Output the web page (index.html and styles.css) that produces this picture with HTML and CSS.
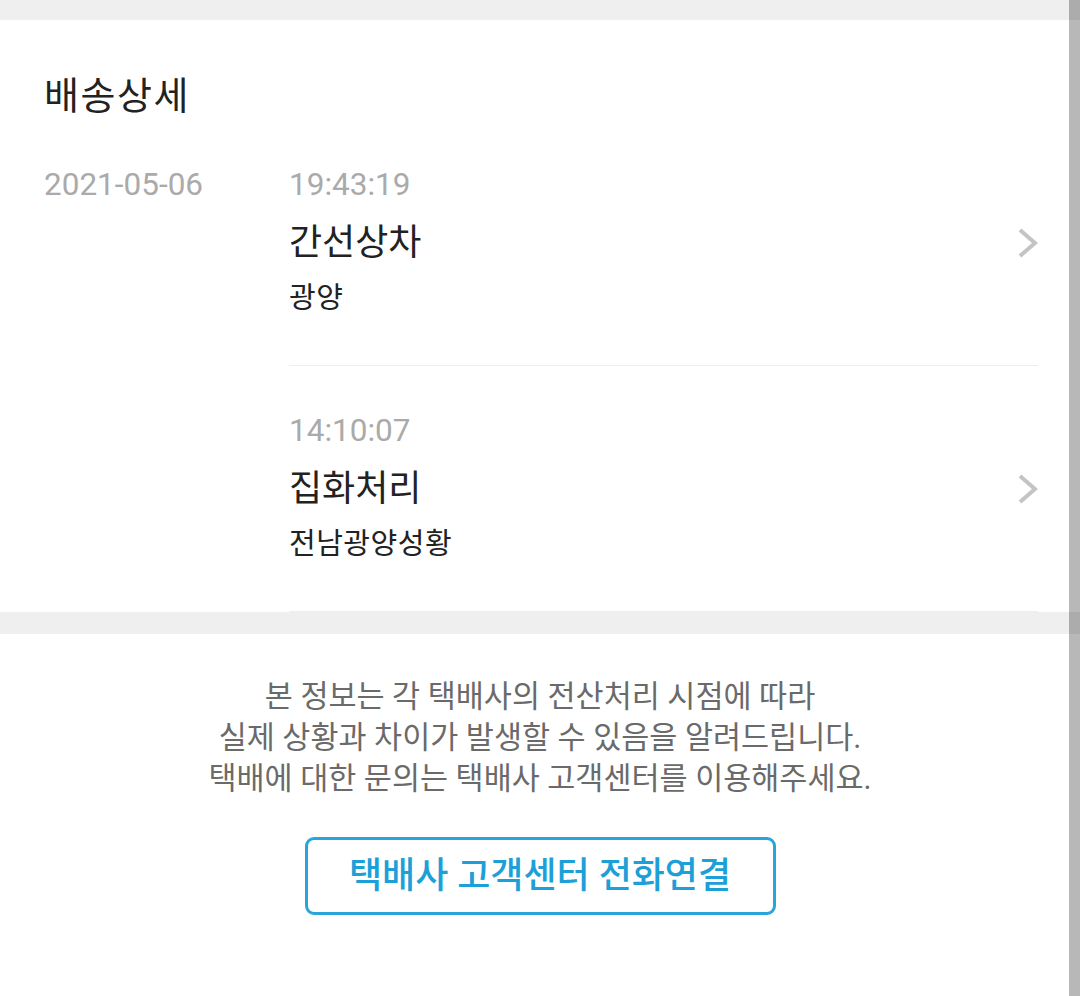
FILE: index.html
```html
<!DOCTYPE html>
<html lang="ko">
<head>
    <meta charset="UTF-8">
    <title>배송상세</title>
    <link rel="stylesheet" href="styles.css">
</head>
<body>
    <div class="page">
        <div class="top-gap"></div>
        <div class="card">
            <h2 class="card-title">배송상세</h2>
            <div class="day">
                <div class="day-date">2021-05-06</div>
                <div class="day-list">
                    <div class="entry">
                        <div class="entry-time">19:43:19</div>
                        <div class="entry-name">
                            <span>간선상차</span>
                            <svg class="chevron" width="20" height="30" viewBox="0 0 20 30"><polyline points="2,2 17,15 2,28" fill="none" stroke="#c4c4c4" stroke-width="4"/></svg>
                        </div>
                        <div class="entry-place">광양</div>
                    </div>
                    <div class="entry">
                        <div class="entry-time">14:10:07</div>
                        <div class="entry-name">
                            <span>집화처리</span>
                            <svg class="chevron" width="20" height="30" viewBox="0 0 20 30"><polyline points="2,2 17,15 2,28" fill="none" stroke="#c4c4c4" stroke-width="4"/></svg>
                        </div>
                        <div class="entry-place">전남광양성황</div>
                    </div>
                </div>
            </div>
        </div>
        <div class="notice">
            <p class="notice-text">본 정보는 각 택배사의 전산처리 시점에 따라<br>실제 상황과 차이가 발생할 수 있음을 알려드립니다.<br>택배에 대한 문의는 택배사 고객센터를 이용해주세요.</p>
            <div class="call-btn">택배사 고객센터 전화연결</div>
        </div>
    </div>
    <div class="scrollbar"></div>
</body>
</html>
```

FILE: styles.css
```css
*{
    margin: 0;
    padding: 0;
    box-sizing: border-box;
}
body{
    background: #efefef;
    font-family: Roboto, "Noto Sans CJK KR", sans-serif;
    color: #222;
    overflow: hidden;
}
.page{
    width: 1080px;
    height: 996px;
    display: flex;
    flex-direction: column;
}
.top-gap{
    height: 20px;
}
.card{
    background: #fff;
    padding: 52px 42px 0 44px;
    margin-bottom: 22px;
}
.card-title{
    font-size: 38px;
    font-weight: 400;
    letter-spacing: 1.5px;
    line-height: 48px;
}
.day{
    display: flex;
}
.day-date{
    width: 245px;
    flex-shrink: 0;
    padding-top: 45px;
    font-size: 31.5px;
    line-height: 40px;
    color: #aaa;
}
.day-list{
    flex: 1;
}
.entry{
    padding: 45px 0 48px;
    border-bottom: 1px solid #eee;
}
.entry-time{
    font-size: 31.5px;
    line-height: 40px;
    color: #aaa;
}
.entry-name{
    display: flex;
    justify-content: space-between;
    align-items: center;
    margin-top: 15px;
    font-size: 36px;
    line-height: 46px;
}
.chevron{
    display: block;
}
.entry-place{
    margin-top: 13px;
    font-size: 29px;
    letter-spacing: 0.5px;
    line-height: 38px;
}
.notice{
    flex: 1;
    background: #fff;
    padding-top: 42px;
    display: flex;
    flex-direction: column;
    align-items: center;
}
.notice-text{
    text-align: center;
    font-size: 30.5px;
    line-height: 41px;
    color: #6a6a6a;
}
.call-btn{
    margin-top: 38px;
    width: 471px;
    height: 78px;
    border: 3px solid #2aa5dc;
    border-radius: 9px;
    color: #1d9fd8;
    font-size: 36px;
    font-weight: 500;
    line-height: 72px;
    text-align: center;
}
.scrollbar{
    position: absolute;
    top: 0;
    right: 0;
    width: 11px;
    height: 996px;
    background: rgba(0,0,0,.28);
}
```
